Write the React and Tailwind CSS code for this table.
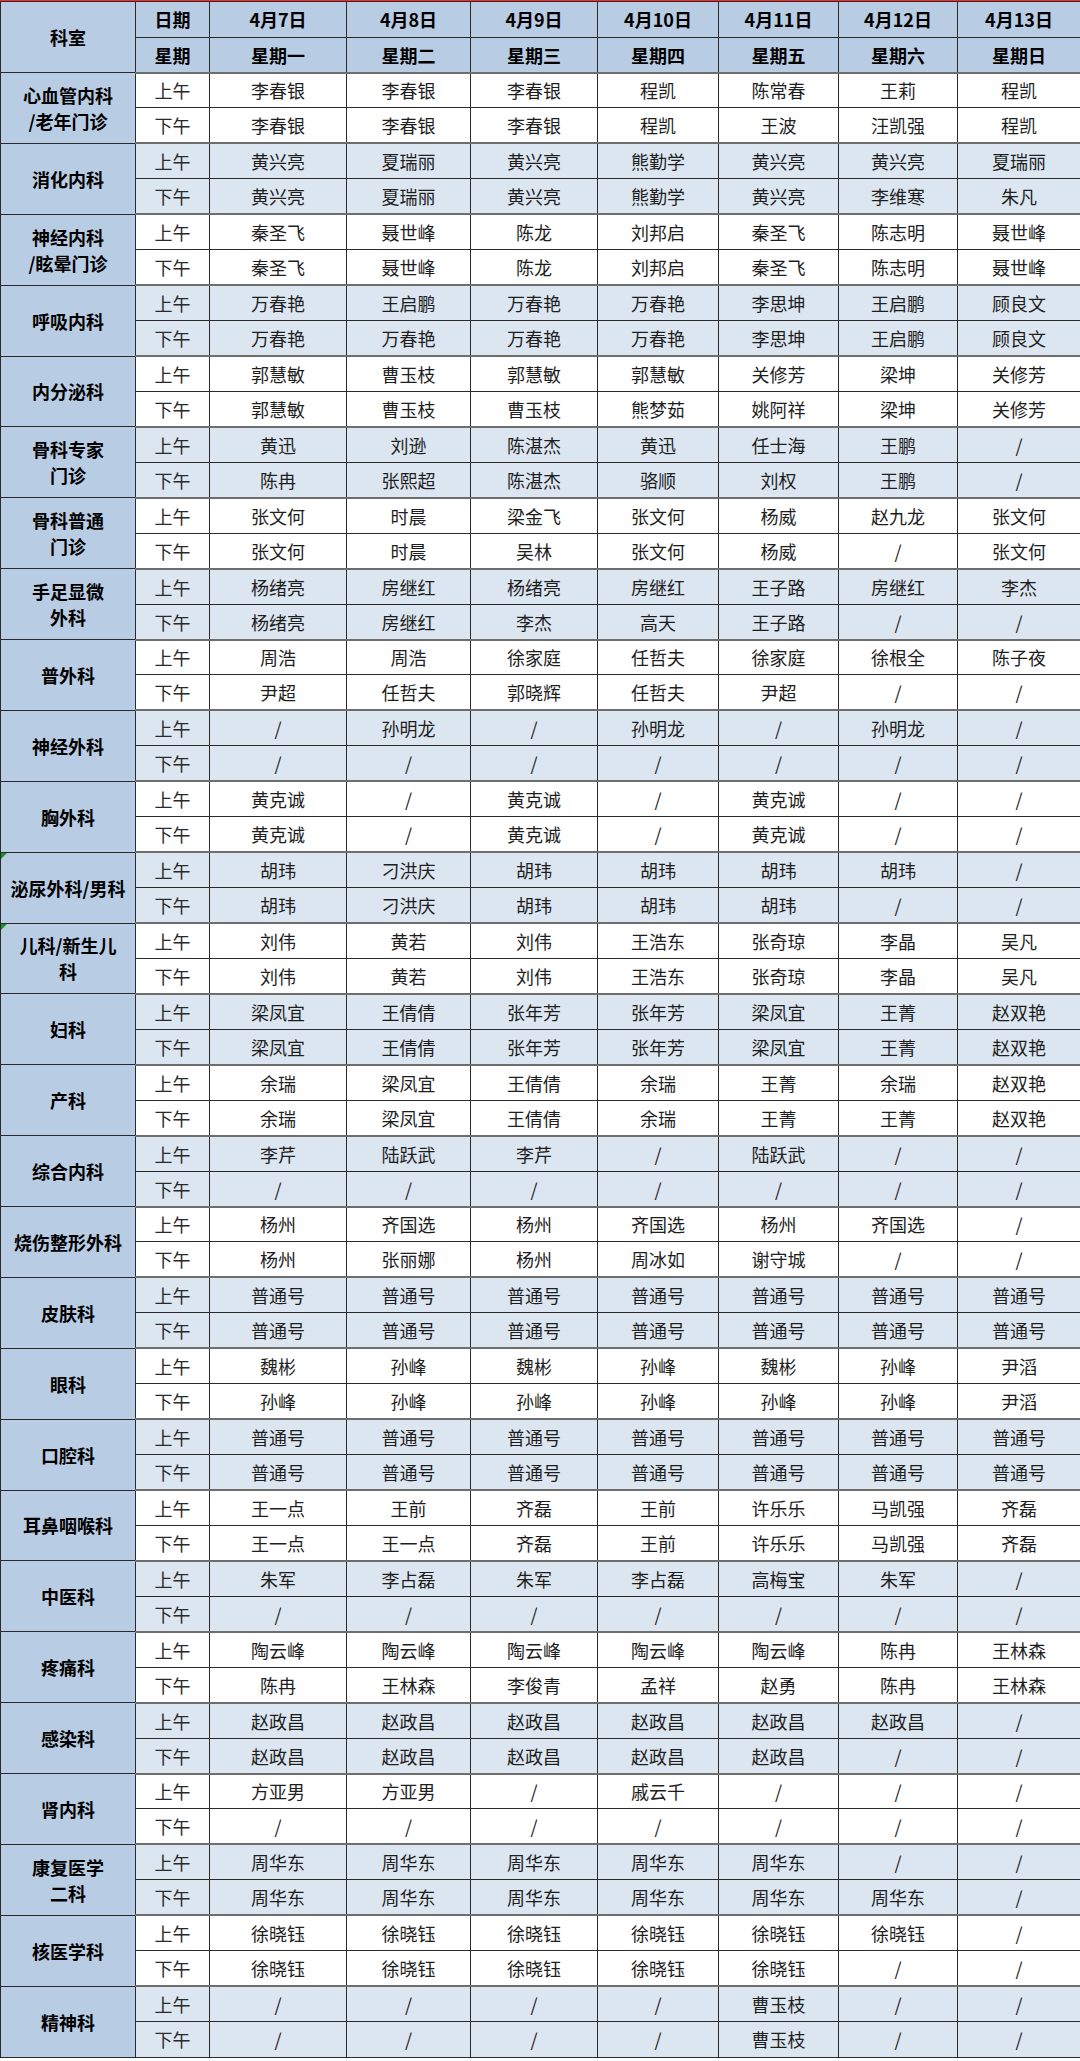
import React from 'react';

const dates = ['4月7日', '4月8日', '4月9日', '4月10日', '4月11日', '4月12日', '4月13日'];
const weekdays = ['星期一', '星期二', '星期三', '星期四', '星期五', '星期六', '星期日'];

const S = '/';
const all = (v) => Array(7).fill(v);

const schedule = [
  { name: ['心血管内科', '/老年门诊'], am: ['李春银', '李春银', '李春银', '程凯', '陈常春', '王莉', '程凯'], pm: ['李春银', '李春银', '李春银', '程凯', '王波', '汪凯强', '程凯'] },
  { name: ['消化内科'], am: ['黄兴亮', '夏瑞丽', '黄兴亮', '熊勤学', '黄兴亮', '黄兴亮', '夏瑞丽'], pm: ['黄兴亮', '夏瑞丽', '黄兴亮', '熊勤学', '黄兴亮', '李维寒', '朱凡'] },
  { name: ['神经内科', '/眩晕门诊'], am: ['秦圣飞', '聂世峰', '陈龙', '刘邦启', '秦圣飞', '陈志明', '聂世峰'], pm: ['秦圣飞', '聂世峰', '陈龙', '刘邦启', '秦圣飞', '陈志明', '聂世峰'] },
  { name: ['呼吸内科'], am: ['万春艳', '王启鹏', '万春艳', '万春艳', '李思坤', '王启鹏', '顾良文'], pm: ['万春艳', '万春艳', '万春艳', '万春艳', '李思坤', '王启鹏', '顾良文'] },
  { name: ['内分泌科'], am: ['郭慧敏', '曹玉枝', '郭慧敏', '郭慧敏', '关修芳', '梁坤', '关修芳'], pm: ['郭慧敏', '曹玉枝', '曹玉枝', '熊梦茹', '姚阿祥', '梁坤', '关修芳'] },
  { name: ['骨科专家', '门诊'], am: ['黄迅', '刘逊', '陈湛杰', '黄迅', '任士海', '王鹏', S], pm: ['陈冉', '张熙超', '陈湛杰', '骆顺', '刘权', '王鹏', S] },
  { name: ['骨科普通', '门诊'], am: ['张文何', '时晨', '梁金飞', '张文何', '杨威', '赵九龙', '张文何'], pm: ['张文何', '时晨', '吴林', '张文何', '杨威', S, '张文何'] },
  { name: ['手足显微', '外科'], am: ['杨绪亮', '房继红', '杨绪亮', '房继红', '王子路', '房继红', '李杰'], pm: ['杨绪亮', '房继红', '李杰', '高天', '王子路', S, S] },
  { name: ['普外科'], am: ['周浩', '周浩', '徐家庭', '任哲夫', '徐家庭', '徐根全', '陈子夜'], pm: ['尹超', '任哲夫', '郭晓辉', '任哲夫', '尹超', S, S] },
  { name: ['神经外科'], am: [S, '孙明龙', S, '孙明龙', S, '孙明龙', S], pm: all(S) },
  { name: ['胸外科'], am: ['黄克诚', S, '黄克诚', S, '黄克诚', S, S], pm: ['黄克诚', S, '黄克诚', S, '黄克诚', S, S] },
  { name: ['泌尿外科/男科'], mark: true, am: ['胡玮', '刁洪庆', '胡玮', '胡玮', '胡玮', '胡玮', S], pm: ['胡玮', '刁洪庆', '胡玮', '胡玮', '胡玮', S, S] },
  { name: ['儿科/新生儿', '科'], mark: true, am: ['刘伟', '黄若', '刘伟', '王浩东', '张奇琼', '李晶', '吴凡'], pm: ['刘伟', '黄若', '刘伟', '王浩东', '张奇琼', '李晶', '吴凡'] },
  { name: ['妇科'], am: ['梁凤宜', '王倩倩', '张年芳', '张年芳', '梁凤宜', '王菁', '赵双艳'], pm: ['梁凤宜', '王倩倩', '张年芳', '张年芳', '梁凤宜', '王菁', '赵双艳'] },
  { name: ['产科'], am: ['余瑞', '梁凤宜', '王倩倩', '余瑞', '王菁', '余瑞', '赵双艳'], pm: ['余瑞', '梁凤宜', '王倩倩', '余瑞', '王菁', '王菁', '赵双艳'] },
  { name: ['综合内科'], am: ['李芹', '陆跃武', '李芹', S, '陆跃武', S, S], pm: all(S) },
  { name: ['烧伤整形外科'], am: ['杨州', '齐国选', '杨州', '齐国选', '杨州', '齐国选', S], pm: ['杨州', '张丽娜', '杨州', '周冰如', '谢守城', S, S] },
  { name: ['皮肤科'], am: all('普通号'), pm: all('普通号') },
  { name: ['眼科'], am: ['魏彬', '孙峰', '魏彬', '孙峰', '魏彬', '孙峰', '尹滔'], pm: ['孙峰', '孙峰', '孙峰', '孙峰', '孙峰', '孙峰', '尹滔'] },
  { name: ['口腔科'], am: all('普通号'), pm: all('普通号') },
  { name: ['耳鼻咽喉科'], am: ['王一点', '王前', '齐磊', '王前', '许乐乐', '马凯强', '齐磊'], pm: ['王一点', '王一点', '齐磊', '王前', '许乐乐', '马凯强', '齐磊'] },
  { name: ['中医科'], am: ['朱军', '李占磊', '朱军', '李占磊', '高梅宝', '朱军', S], pm: all(S) },
  { name: ['疼痛科'], am: ['陶云峰', '陶云峰', '陶云峰', '陶云峰', '陶云峰', '陈冉', '王林森'], pm: ['陈冉', '王林森', '李俊青', '孟祥', '赵勇', '陈冉', '王林森'] },
  { name: ['感染科'], am: ['赵政昌', '赵政昌', '赵政昌', '赵政昌', '赵政昌', '赵政昌', S], pm: ['赵政昌', '赵政昌', '赵政昌', '赵政昌', '赵政昌', S, S] },
  { name: ['肾内科'], am: ['方亚男', '方亚男', S, '戚云千', S, S, S], pm: all(S) },
  { name: ['康复医学', '二科'], am: ['周华东', '周华东', '周华东', '周华东', '周华东', S, S], pm: ['周华东', '周华东', '周华东', '周华东', '周华东', '周华东', S] },
  { name: ['核医学科'], am: ['徐晓钰', '徐晓钰', '徐晓钰', '徐晓钰', '徐晓钰', '徐晓钰', S], pm: ['徐晓钰', '徐晓钰', '徐晓钰', '徐晓钰', '徐晓钰', S, S] },
  { name: ['精神科'], am: [S, S, S, S, '曹玉枝', S, S], pm: [S, S, S, S, '曹玉枝', S, S] },
];

const font = { fontFamily: '"Noto Sans CJK SC", "Noto Sans", sans-serif' };

const App = () => {
  return (
    <div className="w-[1080px] bg-white" style={font}>
      {/* top edge of the cut-off title */}
      <div className="h-[1px] bg-[#ff2a2a]" />
      <table className="w-[1080px] table-fixed border-collapse text-[18px] leading-none text-[#1e1e1e]">
        <colgroup>
          <col className="w-[135px]" />
          <col className="w-[74px]" />
          <col className="w-[137px]" />
          <col className="w-[124px]" />
          <col className="w-[127px]" />
          <col className="w-[121px]" />
          <col className="w-[120px]" />
          <col className="w-[119px]" />
          <col className="w-[123px]" />
        </colgroup>
        <thead>
          <tr className="h-[35.5px] bg-[#b8cce4] font-bold text-black">
            <th rowSpan={2} className="border border-[#2a2a2a] text-center font-bold">科室</th>
            <th className="border border-[#2a2a2a] text-center font-bold">日期</th>
            {dates.map(d => (
              <th key={d} className="border border-[#2a2a2a] text-center font-bold">{d}</th>
            ))}
          </tr>
          <tr className="h-[35.5px] bg-[#b8cce4] font-bold text-black">
            <th className="border border-[#2a2a2a] text-center font-bold">星期</th>
            {weekdays.map(w => (
              <th key={w} className="border border-[#2a2a2a] text-center font-bold">{w}</th>
            ))}
          </tr>
        </thead>
        <tbody>
          {schedule.map((dept, i) => {
            const rowBg = i % 2 === 0 ? 'bg-white' : 'bg-[#dce6f1]';
            return (
              <React.Fragment key={dept.name.join('')}>
                <tr className={`h-[35.45px] ${rowBg}`}>
                  <td
                    rowSpan={2}
                    className="relative border border-[#2a2a2a] border-t-[#555] bg-[#b8cce4] text-center font-bold leading-[1.45] whitespace-nowrap text-black"
                  >
                    {dept.mark && (
                      <span className="absolute left-0 top-0 h-0 w-0 border-t-[6px] border-r-[6px] border-t-[#1f8b2c] border-r-transparent" />
                    )}
                    {dept.name.map((line, k) => (
                      <div key={k}>{line}</div>
                    ))}
                  </td>
                  <td className="border border-[#2a2a2a] border-t-[#6e6e6e] border-t-2 text-center text-[#2a2a2a]">上午</td>
                  {dept.am.map((n, k) => (
                    <td key={k} className="border border-[#2a2a2a] border-t-[#6e6e6e] border-t-2 text-center">{n}</td>
                  ))}
                </tr>
                <tr className={`h-[35.45px] ${rowBg}`}>
                  <td className="border border-[#2a2a2a] text-center text-[#2a2a2a]">下午</td>
                  {dept.pm.map((n, k) => (
                    <td key={k} className="border border-[#2a2a2a] text-center">{n}</td>
                  ))}
                </tr>
              </React.Fragment>
            );
          })}
        </tbody>
      </table>
    </div>
  );
};

export default App;
